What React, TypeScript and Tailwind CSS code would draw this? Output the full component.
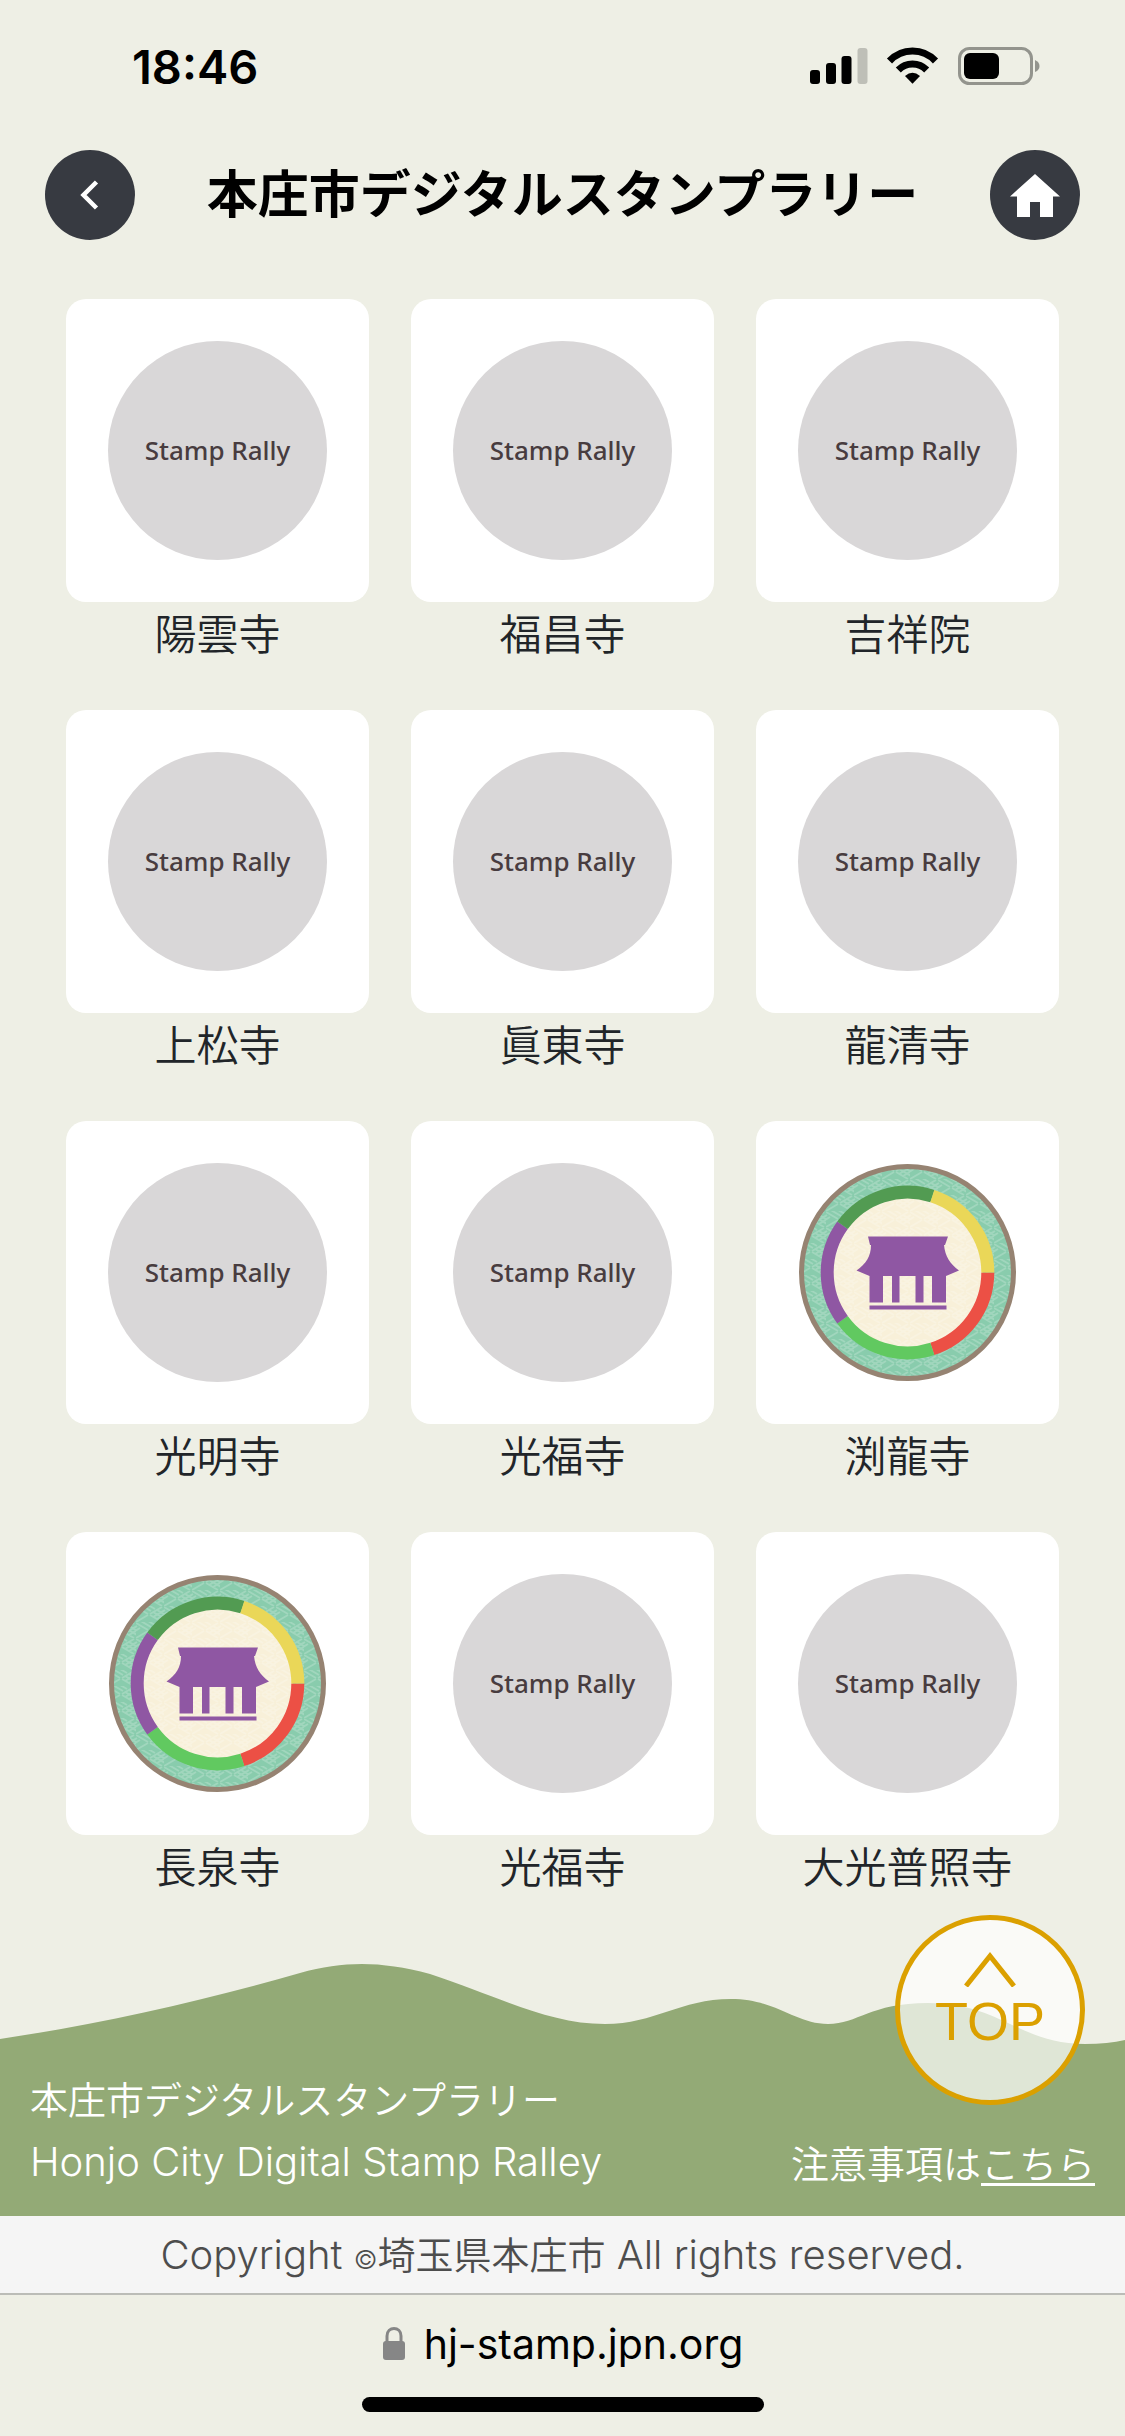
const stamps = [
    { name: '陽雲寺', done: false },
    { name: '福昌寺', done: false },
    { name: '吉祥院', done: false },
    { name: '上松寺', done: false },
    { name: '眞東寺', done: false },
    { name: '龍清寺', done: false },
    { name: '光明寺', done: false },
    { name: '光福寺', done: false },
    { name: '渕龍寺', done: true },
    { name: '長泉寺', done: true },
    { name: '光福寺', done: false },
    { name: '大光普照寺', done: false },
]

// One coloured segment of the stamp ring, 72deg each
const ring = [
    { color: '#ec5045', rotate: 0 },
    { color: '#61c960', rotate: 72 },
    { color: '#8f57a3', rotate: 144 },
    { color: '#529b52', rotate: 216 },
    { color: '#ead758', rotate: 288 },
]

function StampIcon({ id }: { id: string }) {
    return (
        <svg viewBox="0 0 219 219" className="w-full" aria-hidden="true">
            <defs>
                <pattern id={`weave-${id}`} width="28" height="16" patternUnits="userSpaceOnUse">
                    <path
                        d="M0 1l12 7M3 -2l12 7M7 -4l12 7M14 8l12 -7M17 11l12 -7M21 13l12 -7M0 16l12 -7M-8 13l12 -7M-11 11l12 -7M14 9l12 7M17 6l12 7M21 4l12 7"
                        fill="none"
                        stroke="#fff"
                        strokeWidth="1.8"
                        opacity=".2"
                    />
                </pattern>
            </defs>
            <circle cx="109.5" cy="109.5" r="106" fill="#89ccad" />
            <circle cx="109.5" cy="109.5" r="106" fill={`url(#weave-${id})`} stroke="#968372" strokeWidth="5" />
            <circle cx="109.5" cy="109.5" r="75" fill="#f8f0d9" />
            <circle cx="109.5" cy="109.5" r="75" fill={`url(#weave-${id})`} />
            {ring.map((part) => (
                <path
                    key={part.color}
                    d="M189.8 109.5A80.3 80.3 0 0 1 134.3 185.9"
                    transform={`rotate(${part.rotate} 109.5 109.5)`}
                    fill="none"
                    stroke={part.color}
                    strokeWidth="13"
                />
            ))}
            <path
                fill="#8f57a3"
                d="M70 73.5H150L147 82H146C147 93 152 101 161 107.5L148 113V139.5H134V113H125.5V139.5H117.5V113H101.5V139.5H94V113H85V139.5H71.5V113L58.5 107.5C68 101 73 93 73 82H72ZM71.5 142.5H148.5V146.5H71.5Z"
            />
        </svg>
    )
}

function StatusBar() {
    return (
        <div className="flex h-[135px] items-center justify-between pb-[3px] pl-[132px] pr-[85px]">
            <span className="font-['Inter'] text-[47px] font-semibold leading-none text-black">18:46</span>
            <svg viewBox="0 0 230 38" className="w-[230px]" aria-hidden="true">
                <rect x="0" y="23" width="10" height="14" rx="3" />
                <rect x="16" y="16" width="10" height="21" rx="3" />
                <rect x="31.5" y="9" width="10" height="28" rx="3" />
                <rect x="47.5" y="1" width="10" height="36" rx="3" fill="#bebfb7" />
                <path d="M79.5 14A31.4 31.4 0 0 1 125.5 14" fill="none" stroke="#000" strokeWidth="7" />
                <path d="M88.3 23A19.8 19.8 0 0 1 116.7 23" fill="none" stroke="#000" strokeWidth="7" />
                <path d="M95 29Q102.5 22.5 110 29L102.5 36.7Z" />
                <rect x="149.5" y="1.5" width="72" height="35" rx="10" fill="none" stroke="#93948d" strokeWidth="3" />
                <rect x="154" y="6" width="35" height="26" rx="6" />
                <path d="M225 13Q229.5 15 229.5 19T225 25Z" fill="#93948d" />
            </svg>
        </div>
    )
}

function Header() {
    return (
        <header className="flex items-center justify-between px-[45px] pt-[15px]">
            <button type="button" aria-label="戻る" className="flex size-[90px] items-center justify-center rounded-full bg-[#373a41]">
                <svg viewBox="0 0 20 32" className="h-8 w-5" aria-hidden="true">
                    <path d="M16.5 3L3.5 16L16.5 29" fill="none" stroke="#fff" strokeWidth="4.5" />
                </svg>
            </button>
            <h1 className="pb-2 text-[51px] font-bold leading-[75px] text-black">本庄市デジタルスタンプラリー</h1>
            <a href="#home" aria-label="ホーム" className="flex size-[90px] items-center justify-center rounded-full bg-[#373a41]">
                <svg viewBox="0 0 50 43" className="h-[43px] w-[50px]" aria-hidden="true">
                    <path d="M25 0L50 22.5H43V43H30V28H20V43H7V22.5H0Z" fill="#fff" />
                </svg>
            </a>
        </header>
    )
}

function StampGrid() {
    return (
        <main className="grid grid-cols-3 gap-[42px] px-[66px] pt-[59px]">
            {stamps.map((stamp, i) => (
                <figure key={i}>
                    <div className="flex aspect-square items-center justify-center rounded-[20px] bg-white p-[42px]">
                        {stamp.done ? (
                            <StampIcon id={String(i)} />
                        ) : (
                            <div className="flex size-full items-center justify-center rounded-full bg-[#d9d7d8] font-['Noto_Sans'] text-[26px] font-medium text-[#483c3f]">
                                Stamp Rally
                            </div>
                        )}
                    </div>
                    <figcaption className="pb-1.5 text-center text-[42px] font-[350] leading-[60px] text-[#212529]">{stamp.name}</figcaption>
                </figure>
            ))}
        </main>
    )
}

function Footer() {
    return (
        <footer className="relative mt-[63px]">
            <svg viewBox="0 0 1125 92" preserveAspectRatio="none" className="block h-[92px] w-full" aria-hidden="true">
                <path
                    d="M0 75C100 60 200 38 300 9C345 -3 380 -3 430 10C500 33 548 60 605 60C655 60 680 35 731 35C776 35 795 60 828 60C858 60 870 39 928 39C1000 39 1020 80 1085 80Q1108 80 1125 76V92H0Z"
                    fill="#93aa76"
                />
            </svg>
            <div className="flex items-end justify-between bg-[#93aa76] px-[30px] pt-[10px] pb-[22px] text-[38px] font-[350] leading-[64px] text-white">
                <div>
                    <p>本庄市デジタルスタンプラリー</p>
                    <p className="font-['Inter'] text-[40px]">Honjo City Digital Stamp Ralley</p>
                </div>
                <p>
                    注意事項は
                    <a href="#notes" className="underline decoration-[3px] underline-offset-[5px]">
                        こちら
                    </a>
                </p>
            </div>
            <p className="h-[77px] bg-[#f5f5f5] text-center font-['Inter'] text-[40px] font-[350] leading-[77px] text-[#4d4d4d]">
                Copyright <small className="text-[26px]">©</small>
                <span className="font-['Noto_Sans_CJK_JP'] text-[38px] leading-none">埼玉県本庄市</span> All rights reserved.
            </p>
            <a
                href="#top"
                className="absolute -top-[49px] right-10 flex size-[190px] flex-col items-center justify-center gap-1 rounded-full border-[5px] border-[#dba000] bg-white/70 pb-[18px] font-['Liberation_Sans'] text-[54px] leading-[60px] text-[#dba000]"
            >
                <svg viewBox="0 0 52 35" className="h-[35px] w-[52px]" aria-hidden="true">
                    <path d="M2 34L26 4L50 34" fill="none" stroke="currentColor" strokeWidth="5" />
                </svg>
                TOP
            </a>
        </footer>
    )
}

function BrowserBar() {
    return (
        <div className="flex flex-col items-center border-t-2 border-[#bbbcb7] pt-[19px] pb-6">
            <div className="flex items-center gap-[18px] font-['Inter'] text-[41px] leading-[60px] text-black">
                <svg viewBox="0 0 24 34" className="h-[34px] w-6" aria-hidden="true">
                    <path d="M5 16V9C5 -1 19 -1 19 9V16" fill="none" stroke="#868686" strokeWidth="3" />
                    <rect x="1" y="14" width="22" height="19" rx="3" fill="#868686" />
                </svg>
                hj-stamp.jpn.org
            </div>
            <div className="mt-[23px] h-[15px] w-[402px] rounded-full bg-black" />
        </div>
    )
}

export default function App() {
    return (
        <div lang="ja" className="min-h-screen bg-[#eeefe5] font-['Noto_Sans_CJK_JP',sans-serif]">
            <StatusBar />
            <Header />
            <StampGrid />
            <Footer />
            <BrowserBar />
        </div>
    )
}
